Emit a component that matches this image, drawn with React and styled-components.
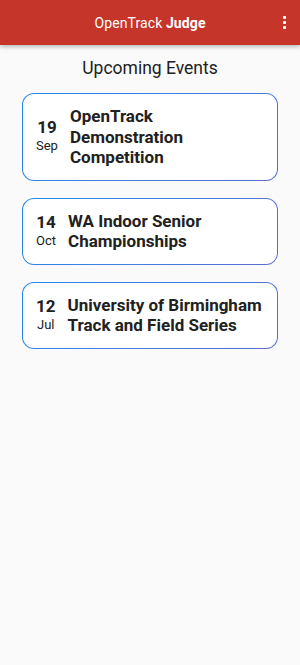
import React from "react";
import styled, { createGlobalStyle } from "styled-components";

const Global = createGlobalStyle`
  html, body { margin: 0; padding: 0; background: #fafafa; }
  body { font-family: Roboto, "Noto Sans", sans-serif; color: #212121; }
  * { box-sizing: border-box; }
`;

const Page = styled.div`
  min-height: 665px;
  background: #fafafa;
`;

const Header = styled.header`
  height: 45px;
  background: #c5352a;
  color: #fff;
  display: flex;
  align-items: center;
  justify-content: center;
  position: relative;
  box-shadow: 0 2px 4px rgba(0,0,0,0.25);
  font-size: 14px;
`;

const Brand = styled.div`
  font-weight: 400;
  letter-spacing: 0.1px;
  b { font-weight: 700; }
`;

const Menu = styled.button`
  position: absolute;
  right: 10px;
  top: 12px;
  width: 12px;
  height: 20px;
  border: 0;
  padding: 0;
  background: transparent;
  display: flex;
  flex-direction: column;
  align-items: center;
  justify-content: center;
  gap: 2px;
  span { width: 3px; height: 3px; background: #fff; border-radius: 1px; }
`;

const Heading = styled.h1`
  margin: 13px 0 15px;
  font-size: 17.5px;
  font-weight: 400;
  text-align: center;
  color: #212121;
`;

const List = styled.div`
  display: flex;
  flex-direction: column;
  gap: 17px;
  padding: 0 22px;
`;

const Card = styled.div`
  display: flex;
  align-items: center;
  gap: 12px;
  padding: 12px 11px 12px 13px;
  border-radius: 12px;
  border: 1px solid transparent;
  background: linear-gradient(#fff, #fff) padding-box,
    linear-gradient(135deg, #1e88e5 0%, #3f7fe0 50%, #5c6bd0 100%) border-box;
`;

const DateCol = styled.div`
  display: flex;
  flex-direction: column;
  align-items: center;
  flex: none;
  margin-top: -2px;
`;

const Day = styled.div`
  font-size: 17px;
  font-weight: 700;
  line-height: 20px;
  color: #212121;
`;

const Month = styled.div`
  font-size: 13px;
  line-height: 17px;
  color: #212121;
`;

const Title = styled.div`
  font-size: 17px;
  font-weight: 700;
  line-height: 20.5px;
  color: #212121;
`;

const events = [
  { day: "19", month: "Sep", title: "OpenTrack Demonstration Competition" },
  { day: "14", month: "Oct", title: "WA Indoor Senior Championships" },
  { day: "12", month: "Jul", title: "University of Birmingham Track and Field Series" },
];

export default function App() {
  return (
    <Page>
      <Global />
      <Header>
        <Brand>OpenTrack <b>Judge</b></Brand>
        <Menu aria-label="menu"><span /><span /><span /></Menu>
      </Header>
      <Heading>Upcoming Events</Heading>
      <List>
        {events.map((e) => (
          <Card key={e.title}>
            <DateCol><Day>{e.day}</Day><Month>{e.month}</Month></DateCol>
            <Title>{e.title}</Title>
          </Card>
        ))}
      </List>
    </Page>
  );
}
